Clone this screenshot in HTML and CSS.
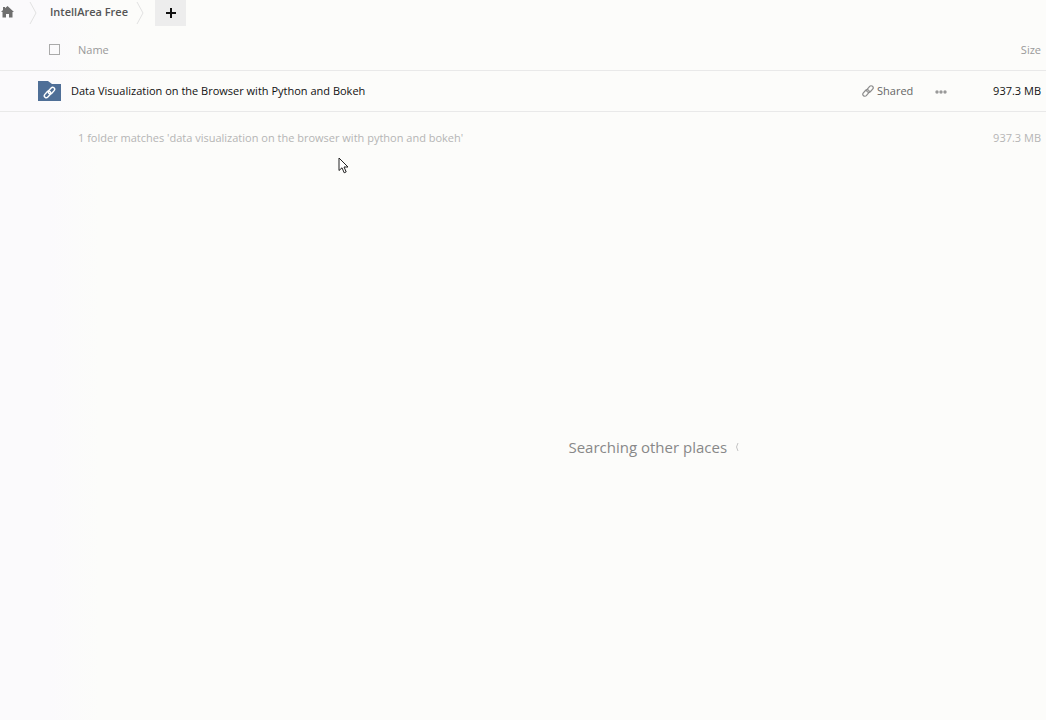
FILE: index.html
```html
<!DOCTYPE html>
<html lang="en">
<head>
  <meta charset="UTF-8" />
  <meta name="viewport" content="width=device-width, initial-scale=1.0"/>
  <title>IntellArea Free</title>
  <link rel="stylesheet" href="styles.css">
</head>
<body>
  <nav class="breadcrumb">
    <a class="home" href="#" aria-label="Home">
      <svg width="14" height="12" viewBox="0 0 14 12"><path d="M7.500 0 14 6H12.500v5.500H9V8H6v3.500H2.500V6H1l2-1.900V1h2v1.200z" fill="#6e6e6e"/></svg>
    </a>
    <svg class="chevron" width="8" height="24" viewBox="0 0 8 24"><path d="M1 1 7 12 1 23"/></svg>
    <a class="crumb" href="#">IntellArea Free</a>
    <svg class="chevron" width="8" height="24" viewBox="0 0 8 24"><path d="M1 1 7 12 1 23"/></svg>
    <button class="add" type="button" aria-label="Add">
      <svg width="10" height="10" viewBox="0 0 10 10"><path d="M5 0v10M0 5h10" stroke="#111" stroke-width="2"/></svg>
    </button>
  </nav>

  <table class="files">
    <thead>
      <tr>
        <th class="col-icon"><input class="tick" type="checkbox" aria-label="Select all"></th>
        <th class="col-name">Name</th>
        <th class="col-shared"></th>
        <th class="col-more"></th>
        <th class="col-size">Size</th>
      </tr>
    </thead>
    <tbody>
      <tr>
        <td class="col-icon">
          <svg width="23" height="20" viewBox="0 0 23 20">
            <path d="M0 0h10l4 3h9v17H0z" fill="#4f6f97"/>
            <g transform="translate(11.500 11.500) rotate(-48)" fill="none" stroke="#fff" stroke-width="1.400">
              <rect x="-6.500" y="-2.200" width="7.500" height="4" rx="2"/>
              <rect x="-1" y="-1.800" width="7.500" height="4" rx="2"/>
            </g>
          </svg>
        </td>
        <td class="col-name"><a class="file" href="#">Data Visualization on the Browser with Python and Bokeh</a></td>
        <td class="col-shared">
          <a class="shared" href="#">
            <svg width="12" height="12" viewBox="0 0 12 12">
              <g transform="translate(6 6) rotate(-48)" fill="none" stroke="#8c8c8c" stroke-width="1.200">
                <rect x="-6.500" y="-2.200" width="7.500" height="4" rx="2"/>
                <rect x="-1" y="-1.800" width="7.500" height="4" rx="2"/>
              </g>
            </svg>
            Shared
          </a>
        </td>
        <td class="col-more">
          <button class="more" type="button" aria-label="More">
            <svg width="12" height="4" viewBox="0 0 12 4" fill="#999"><circle cx="2" cy="2" r="1.700"/><circle cx="6" cy="2" r="1.700"/><circle cx="10" cy="2" r="1.700"/></svg>
          </button>
        </td>
        <td class="col-size">937.3 MB</td>
      </tr>
    </tbody>
    <tfoot>
      <tr>
        <td class="col-icon"></td>
        <td class="col-name" colspan="3">1 folder matches 'data visualization on the browser with python and bokeh'</td>
        <td class="col-size">937.3 MB</td>
      </tr>
    </tfoot>
  </table>

  <main class="searching">
    <span>Searching other places</span>
    <svg width="4" height="10" viewBox="0 0 4 10"><path d="M3 1Q0 5 3 9" fill="none" stroke="#c4c4c4"/></svg>
  </main>

  <svg class="cursor" width="11" height="17" viewBox="0 0 11 17"><path d="M1 1v12.500l3-2.700 2.200 5 2-.9L6 10h4z" fill="#fff" stroke="#222" stroke-linejoin="round"/></svg>
</body>
</html>
```
FILE: styles.css
```css
* {
  box-sizing: border-box;
}

body {
  display: flex;
  flex-direction: column;
  min-height: 100vh;
  margin: 0;
  background: linear-gradient(to right, #fbfafc 50px, #fcfcfa 100px);
  color: #111;
  font-family: "Open Sans", sans-serif;
  font-size: 11px;
  line-height: 16px;
}

a {
  color: inherit;
  text-decoration: none;
}

svg {
  display: block;
  flex: none;
}

button {
  border: 0;
  padding: 0;
  background: none;
  font: inherit;
}

.breadcrumb {
  display: flex;
  align-items: center;
  height: 26px;
}

.home {
  width: 29px;
  padding-bottom: 2px;
}

.chevron {
  fill: none;
  stroke: #e2e2e2;
}

.crumb {
  padding: 0 8px 2px 13px;
  color: #555;
  font-weight: 600;
}

.add {
  display: flex;
  align-items: center;
  justify-content: center;
  width: 31px;
  height: 26px;
  margin-left: 11px;
  background: #ededed;
}

.files {
  width: 100%;
  border-collapse: collapse;
  table-layout: fixed;
}

.files th,
.files td {
  padding: 0;
  border-bottom: 1px solid #e9e9e9;
  text-align: left;
  font-weight: normal;
}

.files th {
  height: 44px;
  padding-top: 4px;
  color: #999;
}

.files tbody td {
  height: 41px;
}

.files tfoot td {
  height: 53px;
  border: 0;
  color: #b5b5b5;
}

.files .col-icon {
  width: 71px;
  padding-right: 10px;
}

.col-icon svg,
.tick {
  display: block;
  margin: 0 0 0 auto;
}

.tick {
  appearance: none;
  width: 11px;
  height: 11px;
  border: 1px solid #aaa;
}

.files th.col-icon {
  padding-right: 11px;
}

.files th.col-name,
.files tfoot .col-name {
  padding-left: 7px;
}

.col-shared {
  width: 71px;
}

.shared {
  display: flex;
  align-items: center;
  gap: 3px;
  color: #666;
}

.col-more {
  width: 53px;
}

.more {
  display: block;
  padding: 2px 2px 0;
}

.files .col-size {
  width: 60px;
  padding-right: 5px;
  text-align: right;
}

.searching {
  display: flex;
  flex: 1;
  align-items: center;
  justify-content: center;
  gap: 8px;
  padding: 10px 0 0 25%;
  color: #888;
  font-size: 15px;
  line-height: 20px;
}

.cursor {
  position: absolute;
  top: 157px;
  left: 338px;
}
```
